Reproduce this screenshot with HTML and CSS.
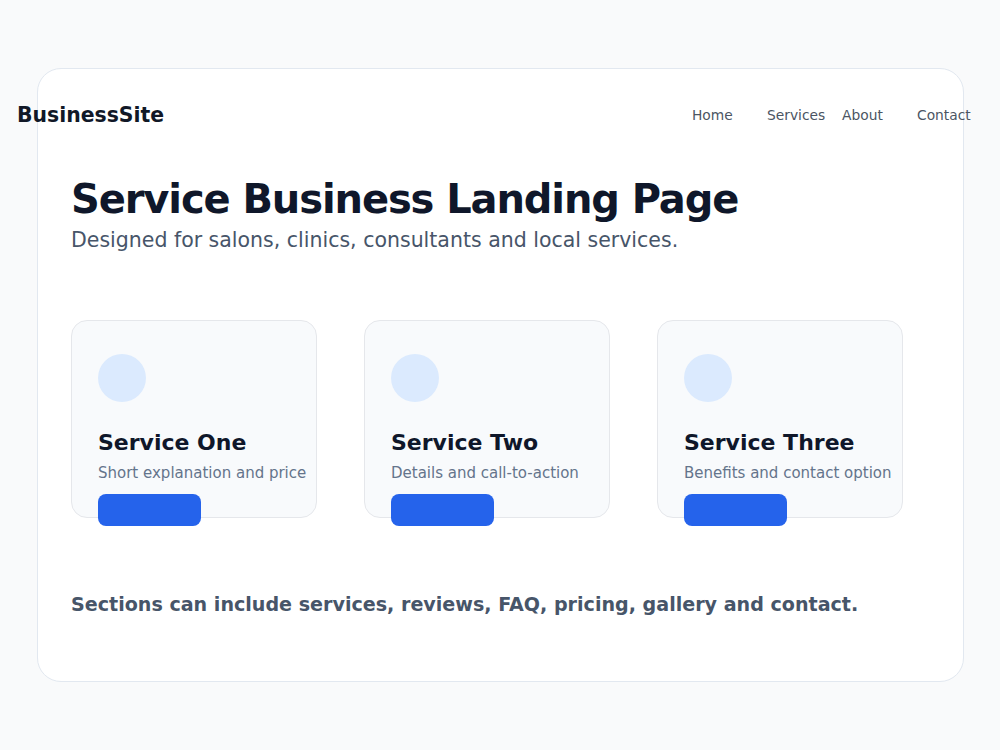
FILE: index.html
```html
<!DOCTYPE html>
<html>
<head>
	<title>BusinessSite</title>
	<meta charset="utf-8"/>
	<link rel="stylesheet" href="styles.css">
</head>
<body>
	<div class="page">
		<div class="frame">
			<div class="header">
				<div class="logo">BusinessSite</div>
				<ul class="menu">
					<li>Home</li>
					<li>Services</li>
					<li>About</li>
					<li>Contact</li>
				</ul>
			</div>
			<div class="hero">
				<h1>Service Business Landing Page</h1>
				<p>Designed for salons, clinics, consultants and local services.</p>
			</div>
			<div class="services">
				<div class="service">
					<div class="icon"></div>
					<h3>Service One</h3>
					<p>Short explanation and price</p>
					<div class="btn"></div>
				</div>
				<div class="service">
					<div class="icon"></div>
					<h3>Service Two</h3>
					<p>Details and call-to-action</p>
					<div class="btn"></div>
				</div>
				<div class="service">
					<div class="icon"></div>
					<h3>Service Three</h3>
					<p>Benefits and contact option</p>
					<div class="btn"></div>
				</div>
			</div>
			<div class="note">Sections can include services, reviews, FAQ, pricing, gallery and contact.</div>
		</div>
	</div>
</body>
</html>
```

FILE: styles.css
```css
body{
	margin: 0;
	background-color: #f9fafb;
	font-family: "DejaVu Sans", sans-serif;
}
.page{
	padding: 68px 36px 68px 37px;
}
.frame{
	height: 614px;
	box-sizing: border-box;
	padding: 33px;
	background-color: #fff;
	border: 1px solid #e2e8f0;
	border-radius: 24px;
}
/* header is wider than the frame on purpose */
.header{
	display: flex;
	justify-content: space-between;
	align-items: center;
	margin: 0 -44px 0 -54px;
	height: 24px;
}
.logo{
	font-size: 20.4px;
	font-weight: bold;
	color: #111827;
	margin-top: 1px;
}
.menu{
	display: grid;
	grid-template-columns: repeat(4, 57px);
	column-gap: 18px;
	margin: 2px 0 0;
	padding: 0;
	list-style: none;
	font-size: 13.8px;
	color: #4b5563;
}
.hero{
	margin-top: 48px;
}
.hero h1{
	margin: 0;
	font-size: 40px;
	line-height: 50px;
	letter-spacing: -1.1px;
	color: #0f172a;
}
.hero p{
	margin: 1px 0 0;
	font-size: 20.5px;
	line-height: 30px;
	color: #475569;
}
.services{
	display: flex;
	gap: 47px;
	margin-top: 65px;
}
.service{
	width: 246px;
	height: 198px;
	box-sizing: border-box;
	padding: 33px 26px 0;
	background-color: #f8fafc;
	border: 1px solid #e5e7eb;
	border-radius: 16px;
}
.icon{
	width: 48px;
	height: 48px;
	border-radius: 50%;
	background-color: #dbeafe;
}
.service h3{
	margin: 26px 0 0;
	font-size: 22px;
	line-height: 30px;
	color: #0f172a;
}
.service p{
	margin: 3px 0 0;
	font-size: 15px;
	line-height: 24px;
	color: #64748b;
	white-space: nowrap;
}
.btn{
	width: 103px;
	height: 32px;
	margin-top: 9px;
	border-radius: 8px;
	background-color: #2563eb;
}
.note{
	margin-top: 75px;
	font-size: 19.1px;
	font-weight: bold;
	color: #475569;
}
```
